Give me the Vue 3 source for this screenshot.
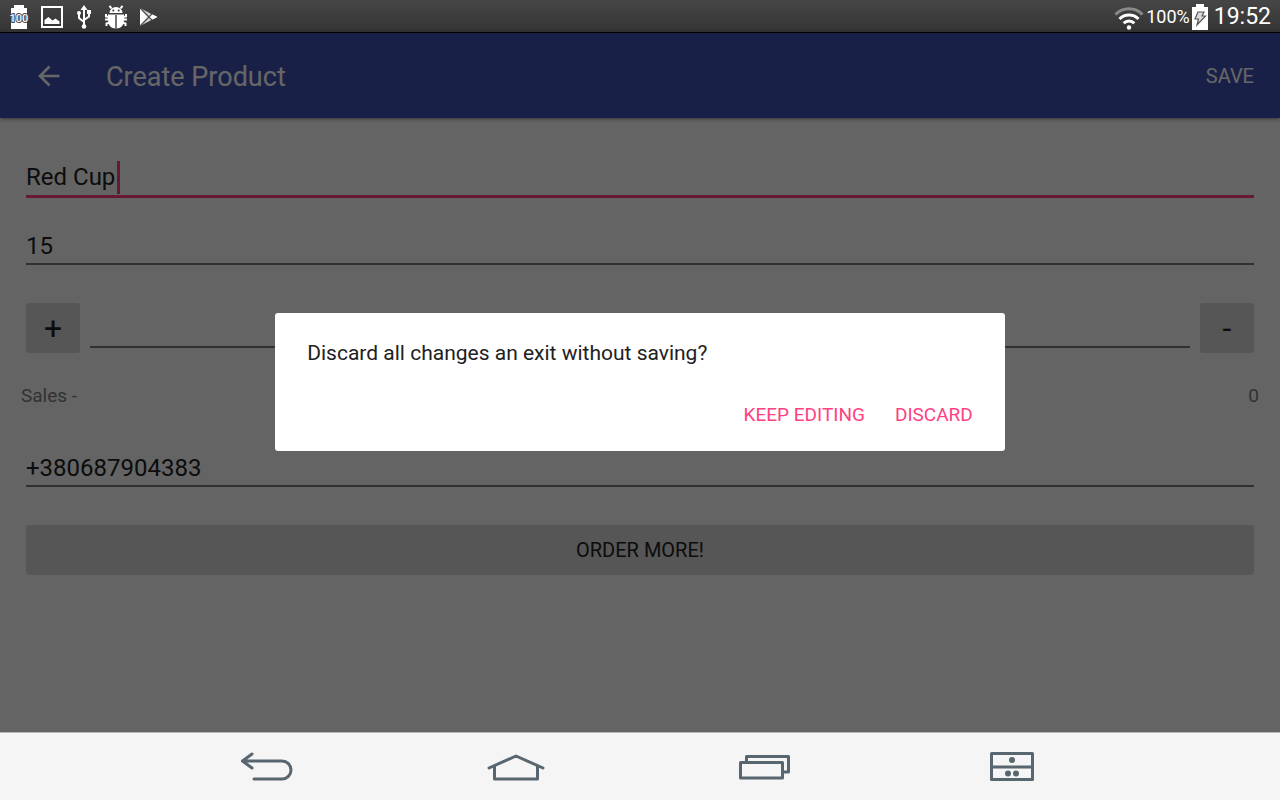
<script setup>
import { ref } from 'vue'

const name = ref('Red Cup')
const price = ref('15')
const quantity = ref('')
const phone = ref('+380687904383')
const sales = ref(0)
</script>

<template>
  <div class="screen">
    <div class="status">
      <div class="notices">
        <svg width="20" height="24" viewBox="0 0 20 24">
          <path d="M5 0h10v3h3v21H2V3h3z" fill="#fff" />
          <text x="10" y="17" text-anchor="middle" class="level">100</text>
        </svg>
        <svg width="22" height="22" viewBox="0 0 22 22">
          <path d="M1 1h20v20H1z" fill="none" stroke="#fff" stroke-width="2" />
          <path d="M3.500 18v-4l4-3 4 3.500 3-2 4 3V18z" fill="#fff" />
        </svg>
        <svg width="18" height="24" viewBox="-2 0 18 24" fill="none" stroke="#fff" stroke-width="2">
          <path d="M7 3v18M2 8v5L7 17M12 7v4.500L7 15" />
          <path d="M7 0l3.500 5h-7z" fill="#fff" stroke="none" />
          <circle cx="7" cy="21.500" r="2.300" fill="#fff" stroke="none" />
          <circle cx="2" cy="8" r="2" fill="#fff" stroke="none" />
          <path d="M10 5h4v4h-4z" fill="#fff" stroke="none" />
        </svg>
        <svg width="22" height="24" viewBox="0 0 22 24">
          <path d="M4.500 8a6.500 6 0 0 1 13 0z" fill="#fff" />
          <path d="M6.500 3.500 4.500 .8M15.500 3.500l2-2.700M4 12 1 11.500V9M18 12l3-.5V9M4 14.500H0M18 14.500h4M5 17.500l-3.500 1V21M17 17.500l3.500 1V21" fill="none" stroke="#fff" stroke-width="2" />
          <path d="M3 9.500h16V15c0 5-3 8.500-8 8.500S3 20 3 15z" fill="#fff" />
          <path d="M11 10v13.500" stroke="#3c3c3c" stroke-width="1.400" />
          <circle cx="8.300" cy="5.600" r="1" fill="#3c3c3c" />
          <circle cx="13.700" cy="5.600" r="1" fill="#3c3c3c" />
        </svg>
        <svg width="19" height="20" viewBox="0 0 19 20">
          <path d="M1 1 18 10 1 19z" fill="#d8d8d8" />
          <path d="M1 1 13 13M1 19 13 7" stroke="#4c4c4c" stroke-width="1.300" />
          <path d="M1 2v16l7-8z" fill="#fff" />
          <path d="m13.500 7.500 5 2.500-5 2.500-2.500-2.500z" fill="#fff" />
        </svg>
      </div>
      <div class="system">
        <svg width="30" height="26" viewBox="0 -2 30 26" fill="none" stroke="#fff" stroke-width="3">
          <path d="M1.500 8.500a19 19 0 0 1 27 0" stroke="#8a8a8a" />
          <path d="M5.500 13a13.500 13.500 0 0 1 19 0" />
          <path d="M9.700 17.300a7.500 7.500 0 0 1 10.600 0" />
          <circle cx="15" cy="21.500" r="2.200" fill="#fff" stroke="none" />
        </svg>
        <span class="percent">100%</span>
        <svg width="16" height="26" viewBox="0 0 16 26">
          <path d="M4 0h8v3h4v23H0V3h4z" fill="#fff" />
          <path d="M6 8h6l-2 4h3.500L5 21l1.500-6H3z" fill="#ddd" stroke="#555" stroke-width="1.200" />
        </svg>
        <time class="clock">19:52</time>
      </div>
    </div>

    <div class="stage">
      <header class="bar">
        <button class="back" type="button" aria-label="Back">
          <svg width="22" height="22" viewBox="0 0 22 22" fill="none" stroke="#fff" stroke-width="2.600">
            <path d="M21.500 11H2.500M11.500 1.500 2 11l9.500 9.500" />
          </svg>
        </button>
        <h1>Create Product</h1>
        <button class="save" type="button">SAVE</button>
      </header>

      <form class="form" @submit.prevent>
        <div class="field active">
          <input v-model="name" class="fit" type="text" aria-label="Product name" />
          <span class="caret"></span>
        </div>
        <div class="field">
          <input v-model="price" type="text" aria-label="Price" />
        </div>
        <div class="stepper">
          <button type="button" class="step" aria-label="Increase">+</button>
          <div class="field">
            <input v-model="quantity" type="text" aria-label="Quantity" />
          </div>
          <button type="button" class="step" aria-label="Decrease">-</button>
        </div>
        <div class="sales"><span>Sales -</span><span>{{ sales }}</span></div>
        <div class="field">
          <input v-model="phone" type="tel" aria-label="Supplier phone" />
        </div>
        <button type="button" class="order">ORDER MORE!</button>
      </form>

      <div class="scrim">
        <div class="dialog" role="alertdialog" aria-labelledby="question">
          <p id="question">Discard all changes an exit without saving?</p>
          <div class="actions">
            <button type="button">KEEP EDITING</button>
            <button type="button">DISCARD</button>
          </div>
        </div>
      </div>
    </div>

    <nav class="nav">
      <button type="button" aria-label="Back">
        <svg width="58" height="32" viewBox="0 0 58 32">
          <path d="M13 3 3.500 10 13 17M4 10h39a9 9 0 0 1 0 18H15" />
        </svg>
      </button>
      <button type="button" aria-label="Home">
        <svg width="58" height="32" viewBox="0 0 58 32">
          <path d="M2 17 29 5l27 12M7.500 15.500V28h43V15.500" />
        </svg>
      </button>
      <button type="button" aria-label="Recent apps">
        <svg width="58" height="32" viewBox="0 0 58 32">
          <path d="M5.500 11.500h42V27h-42zM11.500 11V5.500h42V21H48" />
        </svg>
      </button>
      <button type="button" aria-label="Dual window">
        <svg width="58" height="32" viewBox="0 0 58 32">
          <path d="M8.500 2.500h41v26h-41zM8.500 16h41" />
          <g class="dots"><circle cx="29" cy="9" r="3" /><circle cx="25" cy="22.500" r="3" /><circle cx="33" cy="22.500" r="3" /></g>
        </svg>
      </button>
    </nav>
  </div>
</template>

<style>
body { margin: 0; }
</style>

<style scoped>
.screen {
  display: flex;
  flex-direction: column;
  min-height: 100vh;
  font-family: Roboto, "Noto Sans", sans-serif;
  color: #212121;
}
button, input {
  font: inherit;
  color: inherit;
  border: 0;
  padding: 0;
  margin: 0;
  background: none;
  outline: 0;
}
svg { display: block; flex: none; }

.status {
  display: flex;
  justify-content: space-between;
  align-items: center;
  box-sizing: border-box;
  height: 33px;
  padding: 1px 9px 0;
  color: #fff;
  background: linear-gradient(#464646, #343434);
  border-bottom: 1px solid #000;
}
.notices { display: flex; align-items: center; gap: 12px; }
.level {
  font-size: 11px;
  font-weight: 500;
  fill: #fff;
  stroke: #444;
  stroke-width: 2px;
  paint-order: stroke;
}
.system { display: flex; align-items: center; gap: 2px; }
.percent { font-size: 18px; }
.clock { font-size: 23px; margin-left: 4px; }

.stage {
  position: relative;
  flex: 1;
  display: flex;
  flex-direction: column;
  background: #fafafa;
}
.bar {
  display: flex;
  align-items: center;
  height: 85px;
  padding: 0 26px 0 38px;
  color: #fff;
  background: #3f51b5;
  box-shadow: 0 1px 4px rgba(0, 0, 0, .45);
}
h1 {
  flex: 1;
  margin: 0 0 0 46px;
  padding-top: 2px;
  font-size: 27px;
  line-height: 32px;
  font-weight: 400;
}
.save { font-size: 20px; }

.form {
  display: flex;
  flex-direction: column;
  padding: 32px 26px;
}
.field {
  display: flex;
  align-items: center;
  box-sizing: border-box;
  height: 48px;
  margin-bottom: 19px;
  padding-top: 11px;
  border-bottom: 2px solid #7b7b7b;
  font-size: 24px;
}
.field input { flex: 1; min-width: 0; height: 32px; }
.field input.fit { flex: none; field-sizing: content; padding-right: 2px; }
.field.active { padding-top: 9px; border-bottom: 3px solid #ff4081; }
.caret { width: 3px; height: 33px; background: #ff4081; }
.stepper {
  display: flex;
  gap: 10px;
  align-items: flex-start;
  margin-top: 19px;
}
.stepper .field { flex: 1; height: 45px; margin: 0; }
.step, .order {
  height: 50px;
  border-radius: 3px;
  background: #d6d7d7;
  font-size: 20px;
}
.step { width: 54px; font-size: 32px; }
.sales {
  display: flex;
  justify-content: space-between;
  margin: 31px -5px;
  font-size: 19px;
  line-height: 24px;
  color: #7d7d7d;
}
.order { margin-top: 19px; }

.scrim {
  position: absolute;
  inset: 0;
  display: flex;
  align-items: center;
  justify-content: center;
  padding-bottom: 1px;
  background: rgba(0, 0, 0, .6);
}
.dialog {
  box-sizing: border-box;
  width: 57%;
  padding: 26px 32px 24px;
  border-radius: 3px;
  background: #fff;
}
.dialog p { margin: 0 0 35px; font-size: 21px; line-height: 28px; }
.actions {
  display: flex;
  justify-content: flex-end;
  gap: 30px;
  font-size: 19px;
  line-height: 25px;
  color: #ff4081;
}

.nav {
  display: flex;
  justify-content: center;
  align-items: center;
  gap: 190px;
  height: 67px;
  background: #f5f5f5;
  border-top: 1px solid #b8b8b8;
}
.nav path { fill: none; stroke: #586670; stroke-width: 3; stroke-linejoin: round; stroke-linecap: round; }
.dots { fill: #586670; }
</style>
